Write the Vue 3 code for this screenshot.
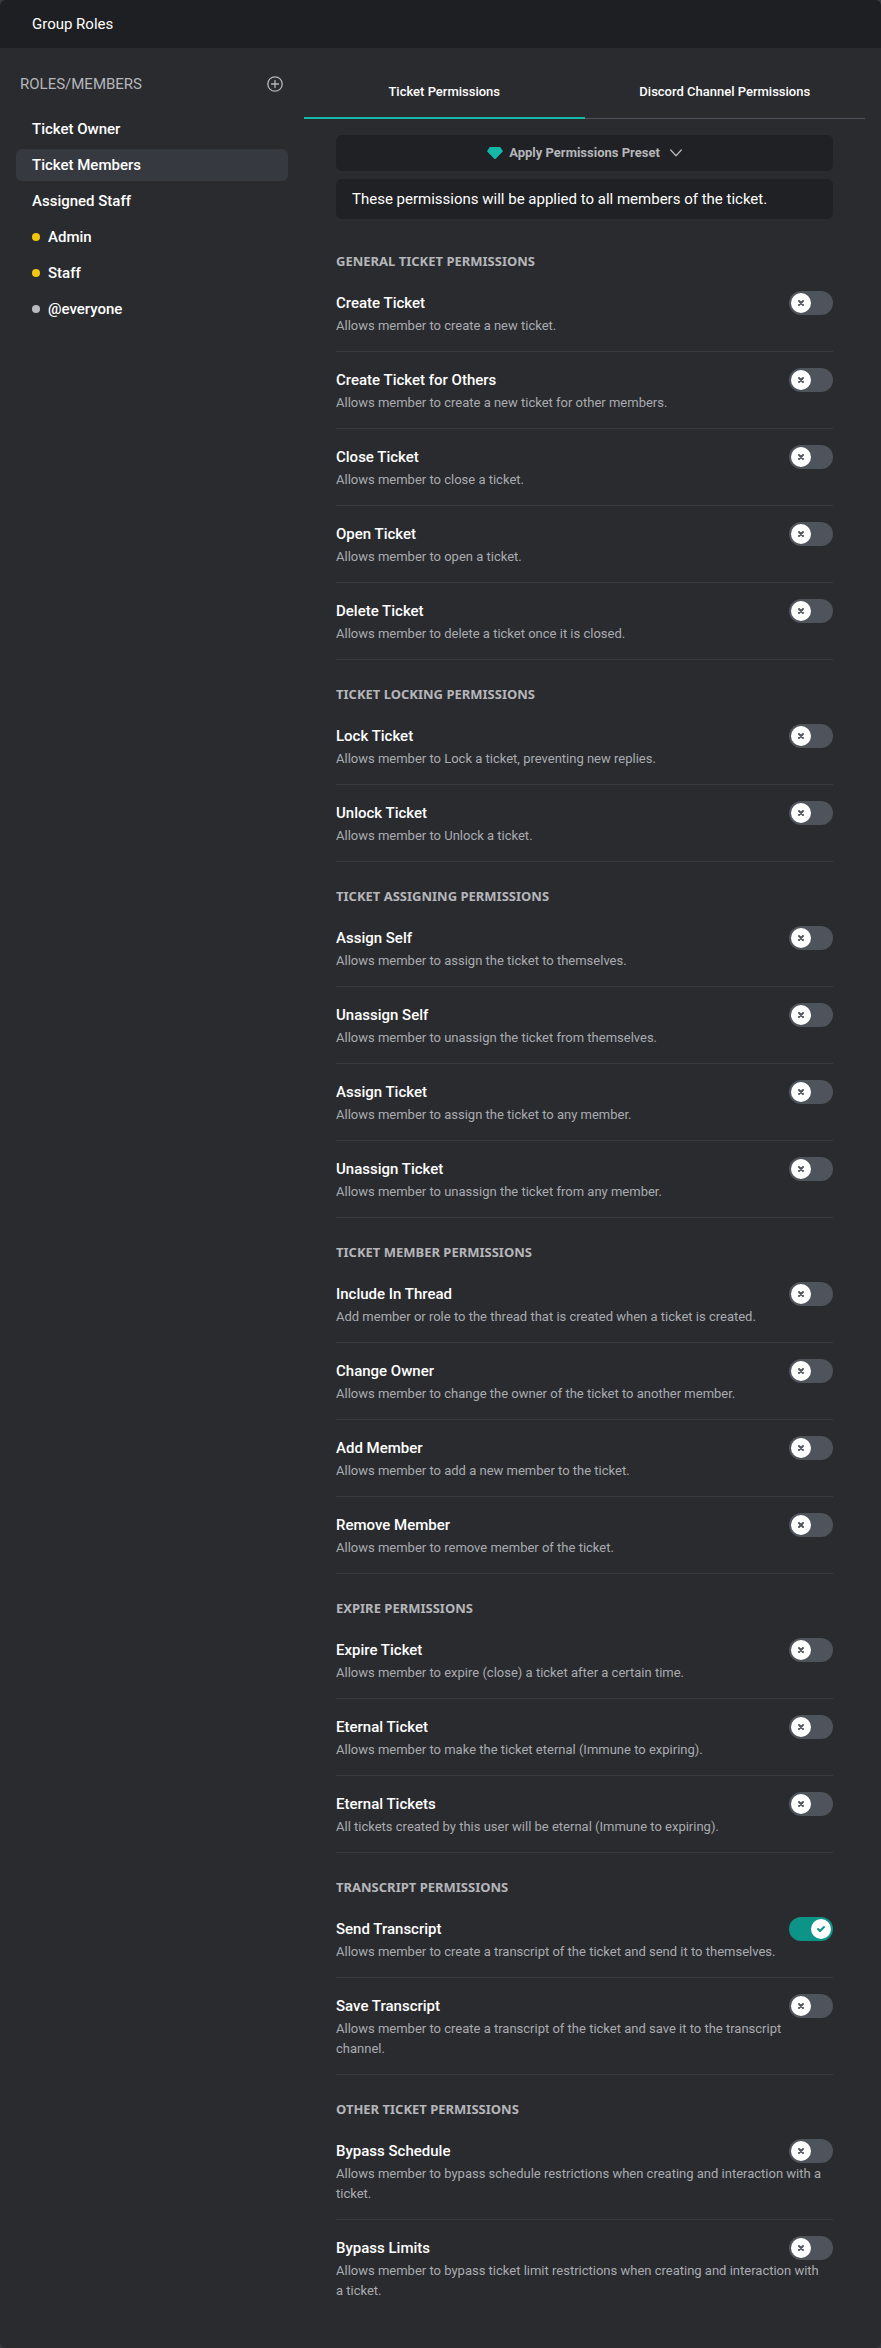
<script setup>
import { ref, reactive } from 'vue'

const roles = [
  { name: 'Ticket Owner' },
  { name: 'Ticket Members' },
  { name: 'Assigned Staff' },
  { name: 'Admin', dot: 'gold' },
  { name: 'Staff', dot: 'gold' },
  { name: '@everyone', dot: 'grey' },
]
const activeRole = ref('Ticket Members')

const tabs = ['Ticket Permissions', 'Discord Channel Permissions']
const activeTab = ref(tabs[0])

const item = (name, text, on = false) => ({ name, text, on })

const groups = reactive([
  {
    title: 'General Ticket Permissions',
    items: [
      item('Create Ticket', 'Allows member to create a new ticket.'),
      item('Create Ticket for Others', 'Allows member to create a new ticket for other members.'),
      item('Close Ticket', 'Allows member to close a ticket.'),
      item('Open Ticket', 'Allows member to open a ticket.'),
      item('Delete Ticket', 'Allows member to delete a ticket once it is closed.'),
    ],
  },
  {
    title: 'Ticket Locking Permissions',
    items: [
      item('Lock Ticket', 'Allows member to Lock a ticket, preventing new replies.'),
      item('Unlock Ticket', 'Allows member to Unlock a ticket.'),
    ],
  },
  {
    title: 'Ticket Assigning Permissions',
    items: [
      item('Assign Self', 'Allows member to assign the ticket to themselves.'),
      item('Unassign Self', 'Allows member to unassign the ticket from themselves.'),
      item('Assign Ticket', 'Allows member to assign the ticket to any member.'),
      item('Unassign Ticket', 'Allows member to unassign the ticket from any member.'),
    ],
  },
  {
    title: 'Ticket Member Permissions',
    items: [
      item('Include In Thread', 'Add member or role to the thread that is created when a ticket is created.'),
      item('Change Owner', 'Allows member to change the owner of the ticket to another member.'),
      item('Add Member', 'Allows member to add a new member to the ticket.'),
      item('Remove Member', 'Allows member to remove member of the ticket.'),
    ],
  },
  {
    title: 'Expire Permissions',
    items: [
      item('Expire Ticket', 'Allows member to expire (close) a ticket after a certain time.'),
      item('Eternal Ticket', 'Allows member to make the ticket eternal (Immune to expiring).'),
      item('Eternal Tickets', 'All tickets created by this user will be eternal (Immune to expiring).'),
    ],
  },
  {
    title: 'Transcript Permissions',
    items: [
      item('Send Transcript', 'Allows member to create a transcript of the ticket and send it to themselves.', true),
      item('Save Transcript', 'Allows member to create a transcript of the ticket and save it to the transcript channel.'),
    ],
  },
  {
    title: 'Other Ticket Permissions',
    items: [
      item('Bypass Schedule', 'Allows member to bypass schedule restrictions when creating and interaction with a ticket.'),
      item('Bypass Limits', 'Allows member to bypass ticket limit restrictions when creating and interaction with a ticket.'),
    ],
  },
])

const idOf = (name) => 'perm-' + name.toLowerCase().replace(/ /g, '-')
</script>

<template>
  <div class="panel">
    <header class="panel-head">
      <h1>Group Roles</h1>
    </header>

    <div class="panel-body">
      <aside class="sidebar">
        <div class="sidebar-head">
          <h2>ROLES/MEMBERS</h2>
          <button type="button" class="add" aria-label="Add role or member">
            <svg viewBox="0 0 16 16" width="16" height="16" fill="none" stroke="currentColor" stroke-width="1.3" stroke-linecap="round">
              <circle cx="8" cy="8" r="7.2" />
              <path d="M8 4.5v7M4.5 8h7" />
            </svg>
          </button>
        </div>
        <nav class="roles">
          <button
            v-for="role in roles"
            :key="role.name"
            type="button"
            class="role"
            :class="{ active: role.name === activeRole }"
            @click="activeRole = role.name"
          >
            <span v-if="role.dot" class="dot" :class="role.dot"></span>
            {{ role.name }}
          </button>
        </nav>
      </aside>

      <main class="main">
        <div class="tabs" role="tablist">
          <button
            v-for="tab in tabs"
            :key="tab"
            type="button"
            role="tab"
            class="tab"
            :class="{ active: tab === activeTab }"
            :aria-selected="tab === activeTab"
            @click="activeTab = tab"
          >{{ tab }}</button>
        </div>

        <div class="content">
          <button type="button" class="preset">
            <svg class="gem" viewBox="0 0 16 12" width="16" height="12" fill="currentColor">
              <path d="M2.8 0h10.4L16 4.2 8.8 11.7q-.8.6-1.6 0L0 4.2z" />
            </svg>
            <span>Apply Permissions Preset</span>
            <svg class="chevron" viewBox="0 0 12 8" width="12" height="8" fill="none" stroke="currentColor" stroke-width="1.3" stroke-linecap="round" stroke-linejoin="round">
              <path d="M.7 1 6 6.7 11.3 1" />
            </svg>
          </button>
          <p class="note">These permissions will be applied to all members of the ticket.</p>

          <section v-for="group in groups" :key="group.title" class="group">
            <h3>{{ group.title }}</h3>
            <div v-for="perm in group.items" :key="perm.name" class="perm">
              <div class="perm-row">
                <label class="perm-name" :for="idOf(perm.name)">{{ perm.name }}</label>
                <span class="switch">
                  <input :id="idOf(perm.name)" v-model="perm.on" type="checkbox" role="switch" />
                  <span class="knob">
                    <svg v-if="perm.on" viewBox="0 0 12 12" width="12" height="12" fill="currentColor">
                      <path d="M3.707 5.293a1 1 0 00-1.414 1.414l1.414-1.414zM5 8l-.707.707a1 1 0 001.414 0L5 8zm4.707-3.293a1 1 0 00-1.414-1.414l1.414 1.414zm-7.414 2l2 2 1.414-1.414-2-2-1.414 1.414zm3.414 2l4-4-1.414-1.414-4 4 1.414 1.414z" />
                    </svg>
                    <svg v-else viewBox="0 0 12 12" width="12" height="12" fill="none" stroke="currentColor" stroke-width="2" stroke-linecap="round">
                      <path d="M4 8l4-4M4 4l4 4" />
                    </svg>
                  </span>
                </span>
              </div>
              <p>{{ perm.text }}</p>
            </div>
          </section>
        </div>
      </main>
    </div>
  </div>
</template>

<style scoped>
.panel {
  min-height: 100vh;
  overflow: hidden;
  border-radius: 6px;
  background: #2a2b2f;
  color: #fff;
  font-family: Roboto, "Noto Sans", sans-serif;
  font-size: 15px;
  line-height: 24px;
}
h1, h2, h3, p {
  margin: 0;
  font-size: inherit;
  font-weight: 400;
}
button {
  border: 0;
  padding: 0;
  background: none;
  color: inherit;
  font: inherit;
  cursor: pointer;
}
svg {
  display: block;
}
.panel-head {
  padding: 12px 32px;
  background: #1e1f23;
}
.panel-body {
  display: grid;
  grid-template-columns: 304px minmax(0, 1fr);
}

.sidebar {
  padding: 24px 16px;
}
.sidebar-head {
  display: flex;
  align-items: center;
  justify-content: space-between;
  padding: 0 5px 0 4px;
  color: #b5b6ba;
}
.roles {
  display: flex;
  flex-direction: column;
  gap: 4px;
  margin-top: 17px;
}
.role {
  display: flex;
  align-items: center;
  gap: 8px;
  padding: 4px 16px;
  border-radius: 6px;
  font-weight: 500;
  text-align: left;
}
.role.active {
  background: #36393f;
}
.dot {
  width: 8px;
  height: 8px;
  border-radius: 50%;
}
.gold {
  background: #f1c40f;
}
.grey {
  background: #b9bbbe;
}

.main {
  padding: 16px 16px 32px 0;
}
.tabs {
  display: grid;
  grid-template-columns: 1fr 1fr;
  box-shadow: inset 0 -1px #50515b;
}
.tab {
  padding: 16px 0 13px;
  border-bottom: 2px solid transparent;
  font-size: 13px;
  font-weight: 500;
}
.tab.active {
  border-color: #14b8a6;
}
.content {
  padding: 16px 32px 0;
}
.preset {
  display: flex;
  align-items: center;
  justify-content: center;
  width: 100%;
  height: 36px;
  border-radius: 6px;
  background: #202124;
  color: #b5b6ba;
  font-size: 13px;
  font-weight: 700;
}
.gem {
  margin-right: 6px;
  color: #14b8a6;
}
.chevron {
  margin-left: 10px;
}
.note {
  margin: 8px 0;
  padding: 8px 16px;
  border-radius: 6px;
  background: #202124;
}

.group {
  padding-top: 24px;
}
.group h3 {
  margin-bottom: 4px;
  color: #b5b6ba;
  font-family: "Noto Sans", sans-serif;
  font-size: 13px;
  font-weight: 700;
  line-height: 20px;
  text-transform: uppercase;
}
.perm {
  padding: 16px 0 15px;
  border-bottom: 1px solid #393b40;
}
.group:last-child .perm:last-child {
  padding-bottom: 0;
  border-bottom: 0;
}
.perm-row {
  display: flex;
  align-items: center;
  justify-content: space-between;
}
.perm-name {
  font-weight: 500;
}
.perm p {
  margin-top: 1px;
  padding-right: 6px;
  color: #a9abb0;
  font-size: 13px;
  line-height: 20px;
}
.switch {
  position: relative;
  flex: none;
  width: 44px;
  height: 24px;
}
.switch input {
  display: block;
  appearance: none;
  width: 100%;
  height: 100%;
  margin: 0;
  border-radius: 12px;
  background: #4e535c;
  cursor: pointer;
}
.switch input:checked {
  background: #0d9488;
}
.knob {
  position: absolute;
  top: 2px;
  left: 2px;
  display: grid;
  place-items: center;
  width: 20px;
  height: 20px;
  border-radius: 50%;
  background: #fff;
  color: #4e535c;
  pointer-events: none;
}
.switch input:checked + .knob {
  right: 2px;
  left: auto;
  color: #0d9488;
}
</style>

<style>
body {
  background: #36393f;
}
</style>
